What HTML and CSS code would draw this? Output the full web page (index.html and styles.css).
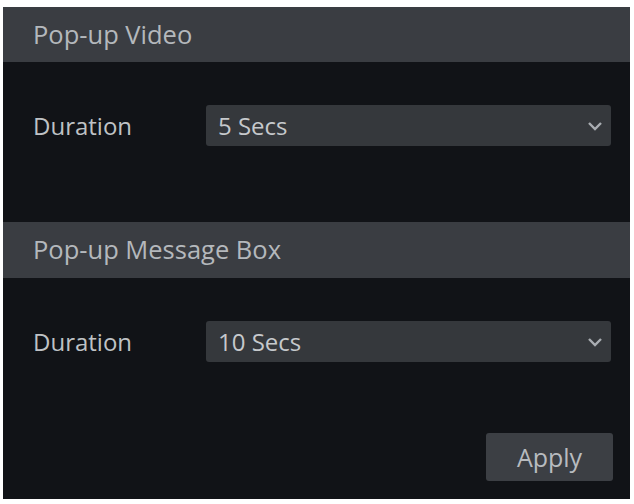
FILE: index.html
```html
<!DOCTYPE html>
<html>
<head>
<meta charset="utf-8">
<link rel="stylesheet" href="styles.css">
</head>
<body>
<div class="panel">
  <div class="section-head">Pop-up Video</div>
  <div class="row first">
    <div class="label">Duration</div>
    <div class="select"><span class="value">5 Secs</span>
      <svg class="chev" width="16" height="10" viewBox="0 0 16 10"><path d="M2 2 L8 8 L14 2" fill="none" stroke="#a9adb2" stroke-width="2.4"/></svg>
    </div>
  </div>
  <div class="section-head second">Pop-up Message Box</div>
  <div class="row first">
    <div class="label">Duration</div>
    <div class="select"><span class="value">10 Secs</span>
      <svg class="chev" width="16" height="10" viewBox="0 0 16 10"><path d="M2 2 L8 8 L14 2" fill="none" stroke="#a9adb2" stroke-width="2.4"/></svg>
    </div>
  </div>
  <div class="actions">
    <button class="btn">Apply</button>
  </div>
</div>
</body>
</html>
```
FILE: styles.css
```css
html, body {
  margin: 0;
  padding: 0;
  background: #ffffff;
}
body {
  padding: 7px 4px 5px 3px;
  font-family: "Open Sans", "Noto Sans", sans-serif;
}
.panel {
  width: 627px;
  height: 492px;
  background: #111317;
  display: flex;
  flex-direction: column;
  box-sizing: border-box;
}
.section-head {
  height: 55px;
  background: #3a3d42;
  color: #b4b8bc;
  font-size: 25.5px;
  display: flex;
  align-items: center;
  padding-left: 30px;
  padding-bottom: 2px;
  box-sizing: border-box;
}
.section-head.second {
  margin-top: 76px;
  height: 56px;
}
.row {
  display: flex;
  align-items: center;
  margin-top: 43px;
  padding-right: 19px;
}
.label {
  width: 203px;
  padding-left: 30px;
  box-sizing: border-box;
  color: #bfc2c5;
  font-size: 24px;
}
.select {
  flex: 1;
  height: 41px;
  background: #35383c;
  border-radius: 3px;
  display: flex;
  align-items: center;
  justify-content: space-between;
  padding: 0 8px 0 12px;
  box-sizing: border-box;
  color: #c6c9cc;
  font-size: 24px;
}
.chev {
  display: block;
}
.actions {
  display: flex;
  justify-content: flex-end;
  margin-top: 71px;
  padding-right: 17px;
}
.btn {
  width: 127px;
  height: 48px;
  background: #3c3f44;
  border: none;
  border-radius: 3px;
  color: #b8bbbf;
  font-family: "Open Sans", "Noto Sans", sans-serif;
  font-size: 25px;
  padding: 0;
}
```
